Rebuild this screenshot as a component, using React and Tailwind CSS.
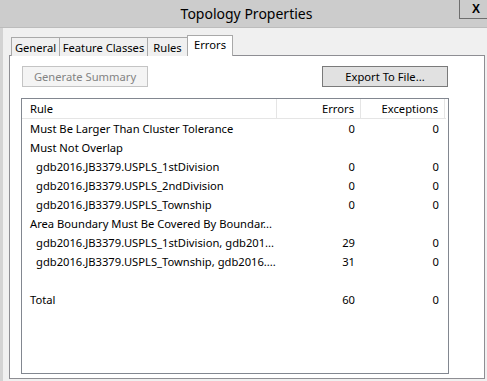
import React from "react";

const rows = [
  { rule: "Must Be Larger Than Cluster Tolerance", e: "0", x: "0" },
  { rule: "Must Not Overlap" },
  { rule: "gdb2016.JB3379.USPLS_1stDivision", e: "0", x: "0", indent: true },
  { rule: "gdb2016.JB3379.USPLS_2ndDivision", e: "0", x: "0", indent: true },
  { rule: "gdb2016.JB3379.USPLS_Township", e: "0", x: "0", indent: true },
  { rule: "Area Boundary Must Be Covered By Boundar..." },
  { rule: "gdb2016.JB3379.USPLS_1stDivision, gdb201...", e: "29", x: "0", indent: true },
  { rule: "gdb2016.JB3379.USPLS_Township, gdb2016....", e: "31", x: "0", indent: true },
  { rule: "" },
  { rule: "Total", e: "60", x: "0" },
];

export default function App() {
  return (
    <div className="w-[487px] h-[381px] bg-[#f0f0f0] flex flex-col overflow-hidden font-['Noto_Sans',sans-serif] text-[11.2px] text-black leading-[19px] whitespace-nowrap">
      {/* title bar */}
      <div className="relative h-[28px] shrink-0 bg-[#cccccc] border-b border-[#bcbcbc] flex items-center justify-center pl-[6px]">
        <span className="text-[14px] leading-[20px] text-[#000]">Topology Properties</span>
        <div className="absolute right-0 top-0 w-[28px] h-[19px] border-l border-b border-[#6e6e6e] flex items-center justify-center pl-[5px]">
          <span className="font-['Liberation_Sans',sans-serif] font-bold text-[12px] leading-none">X</span>
        </div>
      </div>

      {/* body */}
      <div className="flex-1 border-l-[3px] border-[#d3d3d3] pl-[6px] pt-[7px] flex flex-col">
        {/* tabs */}
        <div className="flex items-end h-[21px] pl-[2px] relative z-10 -mb-px">
          <div className="w-[49px] h-[19px] border border-b-0 border-[#a9a9a9] bg-[#f0f0f0] flex items-center justify-center">General</div>
          <div className="w-[89px] h-[19px] -ml-px border border-b-0 border-[#a9a9a9] bg-[#f0f0f0] flex items-center justify-center">Feature Classes</div>
          <div className="w-[41px] h-[19px] -ml-px border border-b-0 border-[#a9a9a9] bg-[#f0f0f0] flex items-center justify-center">Rules</div>
          <div className="w-[46px] h-[21px] -ml-px border border-b-0 border-[#a9a9a9] bg-white flex items-center justify-center pb-[3px]">Errors</div>
        </div>
        {/* panel */}
        <div className="w-[476px] h-[324px] border border-[#8e8e93] bg-white pl-[11px] pt-[10px] flex flex-col">
          <div className="flex justify-between w-[426px] ml-px">
            <div className="w-[126px] h-[21px] border border-[#c4c4c4] bg-[#f4f4f4] text-[#838383] flex items-center justify-center">Generate Summary</div>
            <div className="w-[126px] h-[21px] border border-[#7a7a7a] bg-[#e1e1e1] flex items-center justify-center">Export To File...</div>
          </div>
          <div className="mt-[11px] w-[428px] h-[276px] border border-[#828790] bg-white">
            <div className="flex h-[20px] border-b border-[#e5e5e5] items-center w-[424px]">
              <div className="w-[255px] h-full pl-[8px] flex items-center border-r border-[#e5e5e5]">Rule</div>
              <div className="w-[84px] h-full pr-[6px] flex items-center justify-end border-r border-[#e5e5e5]">Errors</div>
              <div className="w-[84px] h-full pr-[6px] flex items-center justify-end border-r border-[#e5e5e5]">Exceptions</div>
            </div>
            {rows.map((r, i) => (
              <div key={i} className="flex h-[19px] items-center">
                <div className={"w-[255px] h-[19px] overflow-hidden " + (r.indent ? "pl-[14px]" : "pl-[8px]")}>{r.rule}</div>
                <div className="w-[84px] pr-[6px] text-right">{r.e || ""}</div>
                <div className="w-[84px] pr-[6px] text-right">{r.x || ""}</div>
              </div>
            ))}
          </div>
        </div>
      </div>
    </div>
  );
}
